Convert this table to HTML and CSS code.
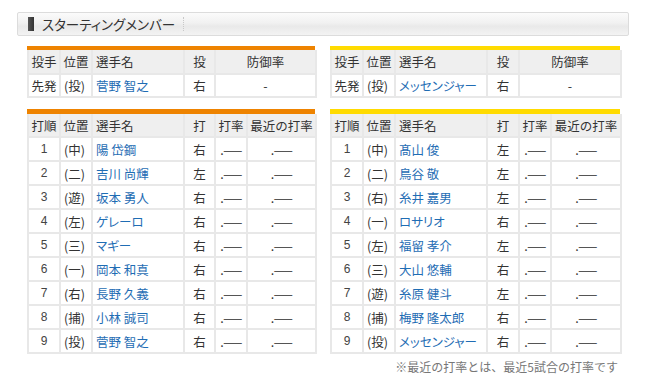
FILE: index.html
```html
<!DOCTYPE html>
<html lang="ja">
<head>
<meta charset="utf-8">
<title>スターティングメンバー</title>
<link rel="stylesheet" href="styles.css">
</head>
<body>
<div class="page">
  <div class="titlebar">
    <span class="mark"></span>
    <h2 class="title">スターティングメンバー</h2>
    <span class="sep"></span>
  </div>

  <div class="grid">
    <div class="team orange">
      <table class="tbl">
        <colgroup><col class="c32"><col class="c32"><col class="c92"><col class="c31"><col class="c101"></colgroup>
        <thead><tr><th>投手</th><th>位置</th><th class="l">選手名</th><th>投</th><th>防御率</th></tr></thead>
        <tbody><tr><td>先発</td><td class="l">(投)</td><td class="l"><a class="name">菅野 智之</a></td><td>右</td><td>-</td></tr></tbody>
      </table>
    </div>
    <div class="team yellow">
      <table class="tbl">
        <colgroup><col class="c32"><col class="c32"><col class="c92"><col class="c32"><col class="c102"></colgroup>
        <thead><tr><th>投手</th><th>位置</th><th class="l">選手名</th><th>投</th><th>防御率</th></tr></thead>
        <tbody><tr><td>先発</td><td class="l">(投)</td><td class="l"><a class="name">メッセンジャー</a></td><td>右</td><td>-</td></tr></tbody>
      </table>
    </div>

    <div class="team orange bat-wrap">
      <table class="tbl bat">
        <colgroup><col class="c32"><col class="c32"><col class="c92"><col class="c31"><col class="c32"><col class="c69"></colgroup>
        <thead><tr><th>打順</th><th>位置</th><th class="l">選手名</th><th>打</th><th>打率</th><th>最近の打率</th></tr></thead>
        <tbody>
          <tr><td class="n">1</td><td class="l">(中)</td><td class="l"><a class="name">陽 岱鋼</a></td><td>右</td><td>.<span class="d">——</span></td><td>.<span class="d">——</span></td></tr>
          <tr><td class="n">2</td><td class="l">(二)</td><td class="l"><a class="name">吉川 尚輝</a></td><td>左</td><td>.<span class="d">——</span></td><td>.<span class="d">——</span></td></tr>
          <tr><td class="n">3</td><td class="l">(遊)</td><td class="l"><a class="name">坂本 勇人</a></td><td>右</td><td>.<span class="d">——</span></td><td>.<span class="d">——</span></td></tr>
          <tr><td class="n">4</td><td class="l">(左)</td><td class="l"><a class="name">ゲレーロ</a></td><td>右</td><td>.<span class="d">——</span></td><td>.<span class="d">——</span></td></tr>
          <tr><td class="n">5</td><td class="l">(三)</td><td class="l"><a class="name">マギー</a></td><td>右</td><td>.<span class="d">——</span></td><td>.<span class="d">——</span></td></tr>
          <tr><td class="n">6</td><td class="l">(一)</td><td class="l"><a class="name">岡本 和真</a></td><td>右</td><td>.<span class="d">——</span></td><td>.<span class="d">——</span></td></tr>
          <tr><td class="n">7</td><td class="l">(右)</td><td class="l"><a class="name">長野 久義</a></td><td>右</td><td>.<span class="d">——</span></td><td>.<span class="d">——</span></td></tr>
          <tr><td class="n">8</td><td class="l">(捕)</td><td class="l"><a class="name">小林 誠司</a></td><td>右</td><td>.<span class="d">——</span></td><td>.<span class="d">——</span></td></tr>
          <tr><td class="n">9</td><td class="l">(投)</td><td class="l"><a class="name">菅野 智之</a></td><td>右</td><td>.<span class="d">——</span></td><td>.<span class="d">——</span></td></tr>
        </tbody>
      </table>
    </div>
    <div class="team yellow bat-wrap">
      <table class="tbl bat">
        <colgroup><col class="c32"><col class="c32"><col class="c92"><col class="c32"><col class="c32"><col class="c70"></colgroup>
        <thead><tr><th>打順</th><th>位置</th><th class="l">選手名</th><th>打</th><th>打率</th><th>最近の打率</th></tr></thead>
        <tbody>
          <tr><td class="n">1</td><td class="l">(中)</td><td class="l"><a class="name">髙山 俊</a></td><td>左</td><td>.<span class="d">——</span></td><td>.<span class="d">——</span></td></tr>
          <tr><td class="n">2</td><td class="l">(二)</td><td class="l"><a class="name">鳥谷 敬</a></td><td>左</td><td>.<span class="d">——</span></td><td>.<span class="d">——</span></td></tr>
          <tr><td class="n">3</td><td class="l">(右)</td><td class="l"><a class="name">糸井 嘉男</a></td><td>左</td><td>.<span class="d">——</span></td><td>.<span class="d">——</span></td></tr>
          <tr><td class="n">4</td><td class="l">(一)</td><td class="l"><a class="name">ロサリオ</a></td><td>右</td><td>.<span class="d">——</span></td><td>.<span class="d">——</span></td></tr>
          <tr><td class="n">5</td><td class="l">(左)</td><td class="l"><a class="name">福留 孝介</a></td><td>左</td><td>.<span class="d">——</span></td><td>.<span class="d">——</span></td></tr>
          <tr><td class="n">6</td><td class="l">(三)</td><td class="l"><a class="name">大山 悠輔</a></td><td>右</td><td>.<span class="d">——</span></td><td>.<span class="d">——</span></td></tr>
          <tr><td class="n">7</td><td class="l">(遊)</td><td class="l"><a class="name">糸原 健斗</a></td><td>左</td><td>.<span class="d">——</span></td><td>.<span class="d">——</span></td></tr>
          <tr><td class="n">8</td><td class="l">(捕)</td><td class="l"><a class="name">梅野 隆太郎</a></td><td>右</td><td>.<span class="d">——</span></td><td>.<span class="d">——</span></td></tr>
          <tr><td class="n">9</td><td class="l">(投)</td><td class="l"><a class="name">メッセンジャー</a></td><td>右</td><td>.<span class="d">——</span></td><td>.<span class="d">——</span></td></tr>
        </tbody>
      </table>
    </div>
  </div>

  <p class="note">※最近の打率とは、最近5試合の打率です</p>
</div>
</body>
</html>
```

FILE: styles.css
```css
html, body {
  margin: 0;
  padding: 0;
  background: #fff;
}
body {
  font-family: "Liberation Sans", "Noto Sans CJK JP", sans-serif;
  font-size: 12px;
  color: #333;
}
.page {
  padding: 12px 0 0 17px;
  width: 612px;
}
.titlebar {
  display: flex;
  align-items: center;
  height: 22px;
  border: 1px solid #dcdcdc;
  border-radius: 2px;
  background: linear-gradient(#fbfbfb 0%, #f1f1f1 45%, #e9e9e9 60%, #f3f3f3 100%);
  padding-left: 10px;
}
.mark {
  width: 6px;
  height: 14px;
  background: linear-gradient(90deg, #555, #333);
  margin-right: 8px;
}
.title {
  margin: 0;
  font-family: "Noto Sans CJK JP", sans-serif;
  font-feature-settings: "palt";
  font-weight: normal;
  font-size: 13.5px;
  color: #333;
  line-height: 16px;
}
.sep {
  width: 0;
  height: 14px;
  border-left: 1px dotted #c8c8c8;
  margin-left: 8px;
}
.grid {
  display: grid;
  grid-template-columns: 288px 290px;
  column-gap: 15px;
  row-gap: 11px;
  margin: 10px 0 0 10px;
  align-items: start;
}
.team.orange { border-top: 4px solid #ee8300; }
.team.yellow { border-top: 4px solid #ffdb00; }
.team.bat-wrap { border-top-width: 5px; }
.tbl {
  width: 100%;
  border-collapse: collapse;
  table-layout: fixed;
}
.c31 { width: 31px; }
.c32 { width: 32px; }
.c69 { width: 69px; }
.c70 { width: 70px; }
.c92 { width: 92px; }
.c101 { width: 101px; }
.c102 { width: 102px; }
.tbl th, .tbl td {
  border: 2px solid #e8e8e8;
  padding: 0;
  text-align: center;
  font-weight: normal;
  font-family: "Noto Sans CJK JP", sans-serif;
  font-size: 12.5px;
  white-space: nowrap;
  overflow: hidden;
}
.tbl thead tr th { border-top: none; }
.tbl th {
  background: #efefef;
  height: 23px;
  color: #333;
}
.tbl td {
  background: #fff;
  height: 21px;
}
.tbl.bat th { height: 22px; }
.tbl.bat td { height: 22px; }
.tbl .l {
  text-align: left;
  padding-left: 3px;
}
.tbl td.n {
  font-family: "Liberation Sans", sans-serif;
  font-size: 12px;
  color: #444;
}
.name {
  color: #1f6db4;
  text-decoration: none;
  font-feature-settings: "palt";
}
.d {
  letter-spacing: -6px;
  font-family: "Liberation Sans", sans-serif;
  font-size: 12px;
  color: #555;
  padding-right: 6px;
}
.note {
  margin: 5px 11px 0 0;
  text-align: right;
  color: #777;
  font-family: "Noto Sans CJK JP", sans-serif;
  font-size: 12px;
  line-height: 16px;
}
```
